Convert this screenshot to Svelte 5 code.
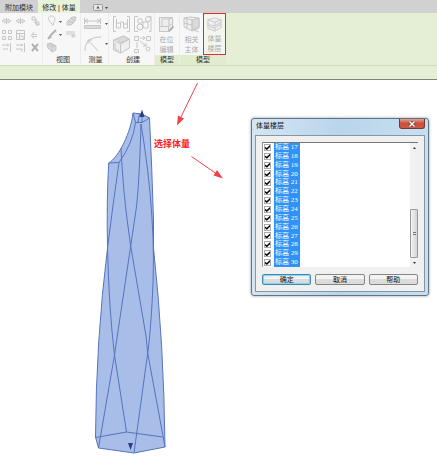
<script>
	let levels = $state(Array.from({ length: 14 }, (_, i) => ({ id: i + 17, checked: true })));
</script>

{#snippet drop()}
	<svg class="drop" width="3" height="2" viewBox="0 0 3 2"><path d="M0 0h3L1.5 2z" /></svg>
{/snippet}

<div class="app">
	<nav class="tabs">
		<button class="tab first">附加模块</button>
		<button class="tab active">修改 | 体量</button>
		<button class="tab toggle" aria-label="最小化">
			<svg width="15" height="7" viewBox="0 0 15 7">
				<rect x="0.5" y="0.5" width="9" height="6" rx="1" fill="#e6e6e6" stroke="#999" />
				<path d="M3.5 4.5h3L5 2z" fill="#444" />
				<path d="M12 3h3l-1.500 2z" fill="#444" />
			</svg>
		</button>
	</nav>

	<div class="ribbon">
		<section class="panel modify">
			<div class="tools">
				<svg class="icon" width="40" height="38" viewBox="0 0 40 38">
					<path d="M2 6l3-2v4zM11 6l-3-2v4zM6.500 3v6M16 6l3-2v4zM25 6l-3-2v4zM20.500 3v6" />
					<path d="M32 2h3v3h-3zM34 7l5 3M36 4v3h3v3h-3z" />
					<path d="M2.500 15.500h3v3h-3zM8.500 15.500h3v3h-3zM2.500 21.500h3v3h-3zM8.500 21.500h3v3h-3z" />
					<path d="M16.500 15.500h8v9h-8zM16.500 18.500h8M19.500 18.500v6M20 21h3v3" />
					<path d="M32 19.500h5M32 21.500h5M34 17l-3 3.500 3 3" />
					<path d="M2 30h5M7 29l2 1-2 1M10.500 28v9M3 34h5M16 30h5M21 29l2 1-2 1M24.500 28v9M16 34h6v3" />
					<path class="heavy" d="M32 29l6 7M38 29l-6 7" />
				</svg>
			</div>
			<footer></footer>
		</section>

		<section class="panel view">
			<div class="tools">
				<svg class="icon" width="32" height="38" viewBox="0 0 32 38">
					<path d="M5.500 9v-1C1 5 2 1 5.500 1S10 5 7.500 8v2h-2" />
					<path class="fill" d="M21 7l5-5h4l-1 4-4 4h-4z" />
					<path d="M22 6l6 2M25 3l4 3" />
					<path class="heavy" d="M2 24l3-4 5-5M3 21l2 2" />
					<path d="M20 17h9M20 19h9M25 21h5M27 19v4" />
					<path class="fill" d="M1 29l4-1 5 3v4l-4 2-4-4z" />
					<path d="M2 30l4 2 4-1M6 32v5M3 28l5 3" />
					<path class="dot" d="M13 6h3l-1.500 2zM13 19h3l-1.500 2z" />
				</svg>
			</div>
			<footer>视图</footer>
		</section>

		<section class="panel measure">
			<div class="tools split">
				<svg class="icon" width="19" height="38" viewBox="0 0 19 38">
					<path d="M1.500 3v6M17.500 3v6M2 6h15M5 4L2 6l3 2M14 4l3 2-3 2" />
					<path class="fill" d="M1.500 10.500h16v3h-16z" />
					<path d="M2 36C2 26 8 22 18 22M15 36L5 25M5 29v-4h4" />
				</svg>
				<div class="drops">{@render drop()}{@render drop()}</div>
			</div>
			<footer>测量</footer>
		</section>

		<section class="panel create">
			<div class="tools">
				<svg class="icon" width="40" height="40" viewBox="0 0 40 40">
					<path d="M4 1.500H1.500v15H4M15 1.500h2.500v15H15" />
					<path d="M4.500 4v9h4V7h3v6h4V4M4.500 8h4M11.500 9h4" />
					<path d="M26 1.500h-3.500v15H26M37 1.500h2v15h-2" />
					<path d="M26 4h4v4h-4zM31 7h5v6h-5z" /><circle cx="36" cy="4" r="2.500" /><circle cx="28" cy="12" r="3" />
					<path class="light" d="M1.500 25l10-4 6 3v9l-9 5-7-3z" />
					<path class="fill" d="M4 24l8-3 5 3-8 4z" />
					<path d="M1.500 25l7 4 9-5M8.500 29v9M3 28v6l4 2" />
					<path d="M22.500 21.500h4v4h-4zM34.500 21.500h4v4h-4zM22.500 34.500h4v3h-4zM28 23h5M31 21l2 2-2 2M25 27v6M28 26l6 5M34 28v3h-3" />
					<circle cx="36" cy="34" r="2" />
				</svg>
			</div>
			<footer>创建</footer>
		</section>

		<section class="panel model">
			<div class="tools">
				<button class="big">
					<svg class="icon" width="17" height="17" viewBox="0 0 17 17">
						<path class="light" d="M1.500 1.500h13v11l-3 3h-10z" />
						<path d="M1.500 10.500h9v5M10.500 10.500l4-3M4 3h7v7M11 3l3-1M4 3v7M12 15l4-5" />
						<path class="heavy" d="M11 15l4-4" />
					</svg>
					<span>在位</span><span>编辑</span>
				</button>
			</div>
			<footer>模型</footer>
		</section>

		<section class="panel mass">
			<div class="tools split">
				<button class="big">
					<svg class="icon" width="17" height="17" viewBox="0 0 17 17">
						<path class="light" d="M1 2l6-1 9 1v10l-7 3-8-4z" />
						<path class="fill" d="M9 4l7-2v9l-7 3z" />
						<path d="M1 2l8 2v10M4 3v9M1 7l8 2M11 14l5 2" />
					</svg>
					<span>相关</span><span>主体</span>
				</button>
				<button class="big marked">
					<svg class="icon" width="17" height="17" viewBox="0 0 17 17">
						<path class="light" d="M1 3l8-2 7 2v9l-7 4-8-3z" />
						<path d="M1 3l8 3 7-3M1 7c3 3 5 3 8 3l7-4M1 9c3 3 5 3 8 3l7-4M9 6v4M9 12v4" />
					</svg>
					<span>体量</span><span>楼层</span>
				</button>
			</div>
			<footer>模型</footer>
		</section>
	</div>
	<div class="options"></div>

	<main>
		<svg class="drawing" width="250" height="383" viewBox="0 80 250 383">
			<path
				class="solid"
				d="M133 113L142 114 149.500 118Q152 170 153.500 220V248Q164 345 165 447L134 453 98.500 448 95.500 437Q96 340 107.500 248Q106.500 200 108.700 163C119 157 131 132 133 113Z"
			/>
			<g class="edges">
				<path d="M133 113L135.500 122.500 142 122.500 149.500 118M142 114V122.500M139.500 114L138 122" />
				<path d="M135.500 122.500Q133 143 119 162.500L108.700 163" />
				<path d="M141 124Q139 190 136 210L130.700 246 116.700 340 114.500 355 98.500 448" />
				<path d="M121 148Q123 190 127.700 224L130.700 246 146 336 147.700 353 165 447" />
				<path d="M141 124Q149 172 151.700 214 155 258 152 304Q150 338 147.700 353L134 453" />
				<path d="M119 162.500Q113 204 107.500 248Q109 310 114.500 355L126.500 432" />
				<path d="M95.500 437.500L126.500 432 162.500 437" />
			</g>
			<path class="grip" d="M142 109.500L144.500 117H139.500zM128 443h5l-2.500 7z" />
			<g class="arrows">
				<path d="M197.500 83L179 121M191.500 156.500L219 175.500" />
				<path class="head" d="M177 125.500L178 115.500 184 118.500zM223 178.500L213.500 175.500 217 170z" />
			</g>
			<text x="154" y="147">选择体量</text>
		</svg>

		<div class="dialog" role="dialog" aria-labelledby="dialog-title">
			<header>
				<h1 id="dialog-title">体量楼层</h1>
				<button class="close" aria-label="关闭">
					<svg width="8" height="6" viewBox="0 0 8 6">
						<path d="M1.500 0.500l5 5M6.500 0.500l-5 5" stroke="#6d3535" stroke-width="3" />
						<path d="M1.500 0.500l5 5M6.500 0.500l-5 5" stroke="#fff" stroke-width="1.500" />
					</svg>
				</button>
			</header>
			<div class="body">
				<div class="list">
					<div class="rows">
						{#each levels as level (level.id)}
							<label><input type="checkbox" bind:checked={level.checked} /><span>标高 {level.id}</span></label>
						{/each}
					</div>
					<div class="scrollbar">
						<svg width="5" height="3" viewBox="0 0 5 3"><path d="M1 3h3L2.500 1z" fill="#333" /></svg>
						<div class="thumb"><i></i></div>
						<svg width="5" height="3" viewBox="0 0 5 3"><path d="M1 0h3L2.500 2z" fill="#333" /></svg>
					</div>
				</div>
				<div class="buttons">
					<button class="default">确定</button>
					<button>取消</button>
					<button>帮助</button>
				</div>
			</div>
		</div>
	</main>
</div>

<style>
	:global(body) {
		margin: 0;
		background: #fff;
	}
	.app {
		min-height: 100vh;
		display: flex;
		flex-direction: column;
		overflow: hidden;
		font: 7px/10px "Liberation Sans", "Noto Sans CJK SC", sans-serif;
		color: #333;
	}
	button {
		font: inherit;
		color: inherit;
		padding: 0;
		border: 0;
		background: none;
		white-space: nowrap;
	}
	svg {
		display: block;
	}

	.tabs {
		display: flex;
		height: 13px;
		background: #d2d1d2;
	}
	.tab {
		padding: 2px 4px 0;
	}
	.first {
		width: 38px;
		padding-right: 5px;
		padding-left: 5px;
	}
	.active {
		width: 42px;
		background: #e9f3d9;
		color: #222;
	}
	.toggle {
		margin-left: 9px;
	}

	.ribbon {
		display: flex;
		height: 52px;
		background: #e4efd5;
	}
	.panel {
		display: flex;
		flex-direction: column;
		background: #f7f7f7;
		border-right: 1px solid #ececec;
		box-sizing: border-box;
	}
	.tools {
		height: 42px;
		padding-top: 2px;
		box-sizing: border-box;
	}
	.split {
		display: flex;
	}
	.panel footer {
		height: 10px;
		text-align: center;
	}
	.modify {
		width: 43px;
	}
	.view {
		width: 38px;
		padding-left: 3px;
	}
	.measure {
		width: 28px;
		padding-left: 2px;
	}
	.create {
		width: 46px;
		padding-left: 3px;
	}
	.model {
		width: 25px;
	}
	.mass {
		width: 46px;
		border-right: 0;
	}
	.model footer,
	.mass footer {
		background: #e0ecce;
	}
	.drops {
		display: flex;
		flex-direction: column;
		gap: 18px;
		padding: 8px 0 0 3px;
	}
	.drop {
		fill: #555;
	}
	.icon {
		fill: none;
		stroke: #c6c6c6;
		stroke-width: 1;
	}
	.icon .heavy {
		stroke: #b2b2b2;
		stroke-width: 2;
	}
	.icon .fill {
		fill: #dadada;
	}
	.icon .light {
		fill: #efefef;
	}
	.icon .dot {
		fill: #555;
		stroke: none;
	}
	.big {
		display: flex;
		flex-direction: column;
		align-items: center;
		width: 23px;
		height: 42px;
		margin-top: -2px;
		padding-top: 3px;
		color: #aaa;
		box-sizing: border-box;
	}
	.big span:first-of-type {
		margin-top: 2px;
	}
	.marked {
		border: 1px solid #df2a35;
		background: #f3f6ec;
	}
	.options {
		height: 15px;
		background: #e4efd5;
		border-top: 1px solid #cfdabf;
		border-bottom: 1px solid #7d8478;
		box-sizing: border-box;
	}

	main {
		position: relative;
		flex: 1;
	}
	.solid {
		fill: #a8bde8;
		stroke: #5674be;
		stroke-width: 1;
	}
	.edges {
		fill: none;
		stroke: #5674be;
		stroke-width: 1;
	}
	.grip {
		fill: #273d85;
	}
	.arrows {
		fill: none;
		stroke: #f04048;
	}
	.arrows .head {
		fill: #f04048;
		stroke: none;
	}
	.drawing text {
		font-size: 9px;
		font-weight: bold;
		fill: #fb1c26;
	}

	/* placed over the drawing area like a floating window */
	.dialog {
		position: absolute;
		left: 251px;
		top: 38px;
		width: 178px;
		padding: 0 3px 3px;
		box-sizing: border-box;
		border: 1px solid #637482;
		border-radius: 3px;
		background: linear-gradient(90deg, #d5e5f3, #b9d5ec 50%, #c7dff2);
		box-shadow: 0 0 3px #8c969e;
	}
	header {
		display: flex;
		justify-content: space-between;
		height: 16px;
		padding-left: 1px;
	}
	h1 {
		margin: 2px 0 0;
		font: inherit;
		color: #111;
	}
	.close {
		display: grid;
		place-items: center;
		width: 26px;
		height: 10px;
		border: 1px solid #75372f;
		border-top: 0;
		border-radius: 0 0 3px 3px;
		background: linear-gradient(#e0a08f, #c9503a 50%, #cf5a40);
	}
	.body {
		padding: 6px;
		border: 1px solid #87979f;
		background: #f0f0f0;
	}
	.list {
		display: flex;
		justify-content: space-between;
		height: 125px;
		box-sizing: border-box;
		border-top: 1px solid #777;
		border-left: 1px solid #999;
		background: #fff;
	}
	.rows {
		display: grid;
		grid-template-rows: repeat(14, 1fr);
		font-family: "Liberation Serif", "Noto Sans CJK SC", serif;
		line-height: 9px;
	}
	.rows label {
		display: flex;
		align-items: center;
		gap: 3px;
		min-height: 0;
	}
	.rows span {
		align-self: stretch;
		width: 24px;
		padding: 0 1px;
		background: #3092f5;
		color: #fff;
		white-space: nowrap;
	}
	.rows input {
		appearance: none;
		position: relative;
		width: 7px;
		height: 7px;
		margin: 0 0 0 1px;
		border: 1px solid #aaa;
		box-sizing: border-box;
		background: #fff;
	}
	.rows input:checked::after {
		content: "";
		position: absolute;
		inset: 0;
		background: #000;
		clip-path: polygon(0 35%, 35% 60%, 100% 0, 100% 40%, 38% 100%, 0 70%);
	}
	.scrollbar {
		display: flex;
		flex-direction: column;
		align-items: center;
		width: 8px;
		padding: 3px 0 2px;
		background: #f1f1f1;
	}
	.thumb {
		display: grid;
		place-items: center;
		width: 6px;
		height: 47px;
		margin: auto 0 4px;
		border: 1px solid #999;
		border-radius: 1px;
		background: linear-gradient(90deg, #f4f4f4, #d4d4d4);
	}
	.thumb i {
		width: 3px;
		height: 1px;
		border: solid #777;
		border-width: 1px 0;
	}
	.buttons {
		display: flex;
		gap: 4px;
		padding-top: 7px;
	}
	.buttons button {
		flex: 1;
		height: 11px;
		border: 1px solid #858585;
		border-radius: 2px;
		background: linear-gradient(#f3f3f3 50%, #dcdcdc 50%);
		line-height: 9px;
		color: #111;
	}
	.buttons .default {
		border-color: #3c8bb0;
		box-shadow: inset 0 0 1px 1px #7fd3f2;
	}
</style>
